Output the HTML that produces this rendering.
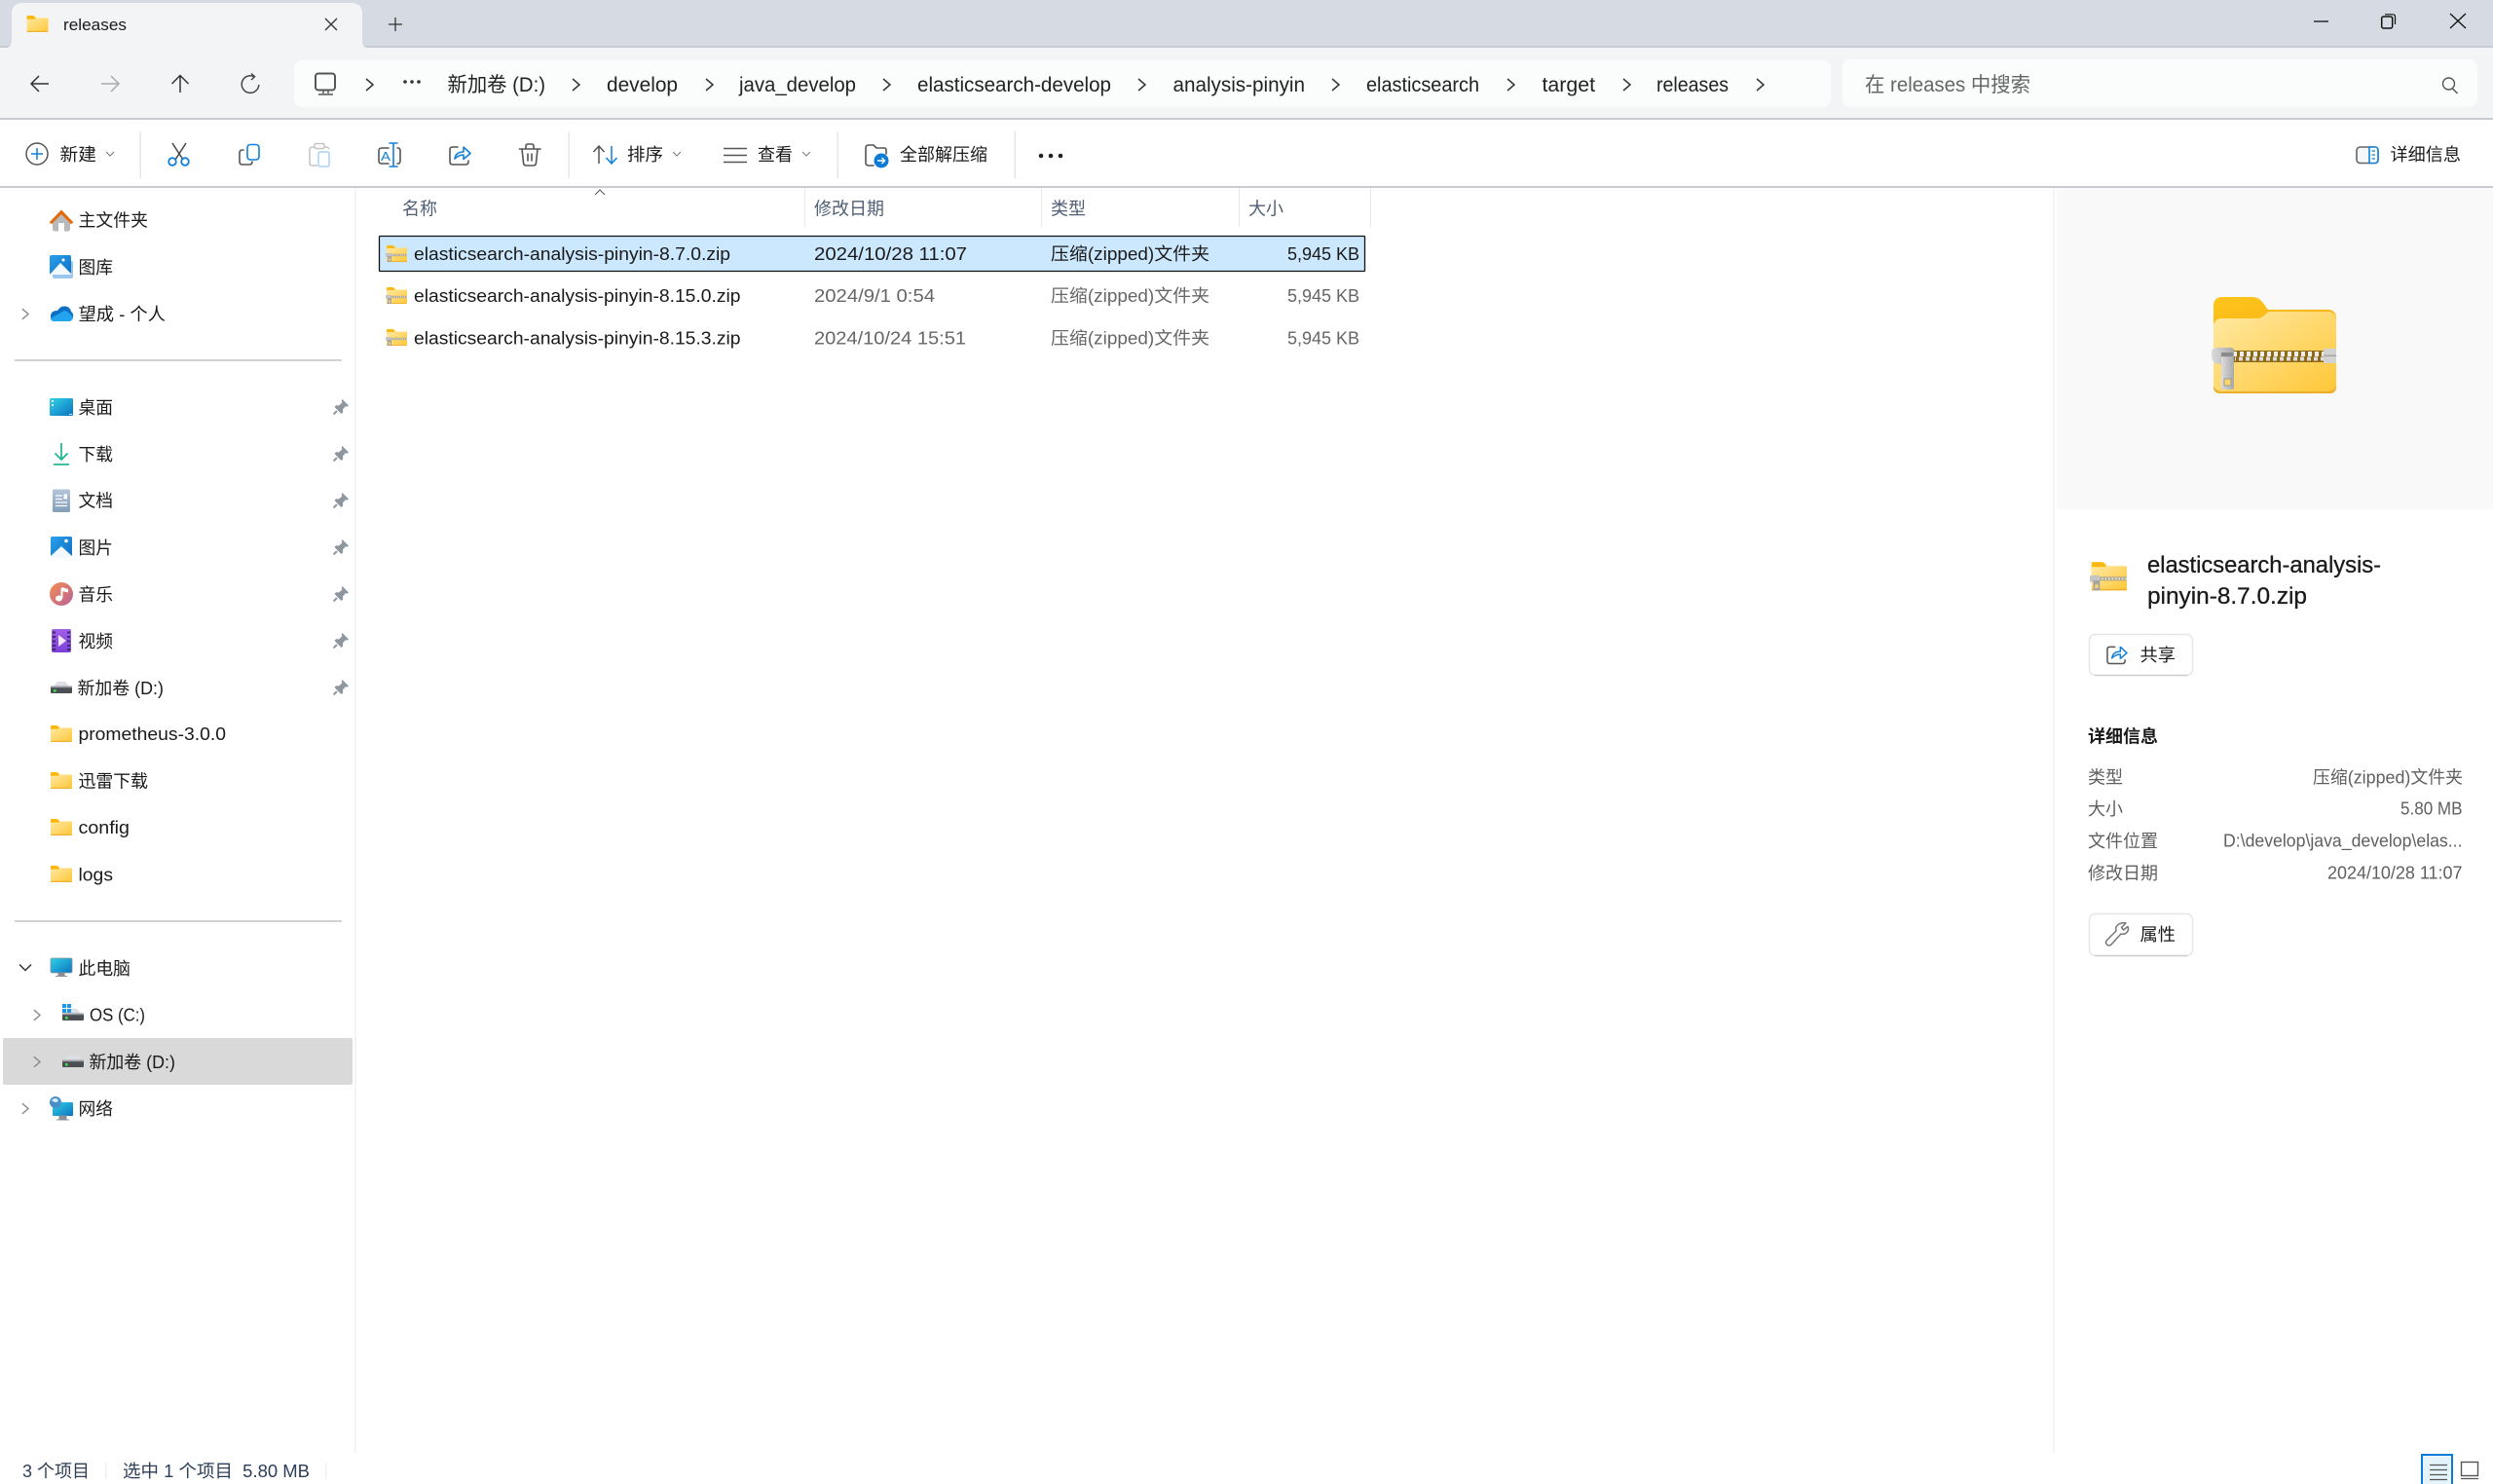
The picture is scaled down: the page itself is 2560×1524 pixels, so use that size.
<!DOCTYPE html>
<html lang="zh-CN">
<head>
<meta charset="utf-8">
<title>releases</title>
<style>
html,body{margin:0;padding:0;background:#fff;width:2560px;height:1524px;overflow:hidden}
svg{display:block}
text{font-family:"Liberation Sans","Noto Sans CJK SC",sans-serif;font-size:18px;fill:#1a1a1a;white-space:pre}
.a{font-size:21px;fill:#222}
.g{fill:#666}
.h{fill:#4f5f75}
.p{fill:#5f5f5f}
.s{fill:#2d3f58}
.i{fill:none;stroke:#555;stroke-width:1.6;stroke-linecap:round;stroke-linejoin:round}
.b{fill:none;stroke:#1080d8;stroke-width:1.6;stroke-linecap:round;stroke-linejoin:round}
</style>
</head>
<body>
<svg xmlns="http://www.w3.org/2000/svg" width="2560" height="1524" viewBox="0 0 2560 1524">
<defs>
<linearGradient id="fg" x1="0" y1="0" x2="1" y2="1"><stop offset="0" stop-color="#ffe9a3"/><stop offset="1" stop-color="#ffc737"/></linearGradient>
<linearGradient id="tb" x1="0" y1="0" x2="1" y2="1"><stop offset="0" stop-color="#ffc61c"/><stop offset="1" stop-color="#f4ae12"/></linearGradient>
<linearGradient id="mt" x1="0" y1="0" x2="1" y2="0"><stop offset="0" stop-color="#dcdcdc"/><stop offset="1" stop-color="#a9a9a9"/></linearGradient>
<linearGradient id="blue" x1="0" y1="0" x2="1" y2="1"><stop offset="0" stop-color="#2aa0ea"/><stop offset="1" stop-color="#0f6fc4"/></linearGradient>
<linearGradient id="desk" x1="0" y1="0" x2="1" y2="1"><stop offset="0" stop-color="#2fd3e6"/><stop offset="1" stop-color="#0c72c0"/></linearGradient>
<linearGradient id="mus" x1="0" y1="0" x2="1" y2="1"><stop offset="0" stop-color="#f29050"/><stop offset="1" stop-color="#b9609a"/></linearGradient>
<linearGradient id="vid" x1="0" y1="0" x2="0" y2="1"><stop offset="0" stop-color="#a060e8"/><stop offset="1" stop-color="#7d3ed8"/></linearGradient>
<linearGradient id="doc" x1="0" y1="0" x2="0" y2="1"><stop offset="0" stop-color="#b4c6d9"/><stop offset="1" stop-color="#849eb9"/></linearGradient>
<symbol id="fold" viewBox="0 0 22 17">
<path d="M0 1a1 1 0 0 1 1-1h5q1 0 2 1l1.500 1.500H21a1 1 0 0 1 1 1V8H0z" fill="#fdb913"/>
<path d="M0 4.500a.8.800 0 0 1 .8-.8H7q1 0 2-.8L9.500 2.500H21a1 1 0 0 1 1 1V16a1 1 0 0 1-1 1H1a1 1 0 0 1-1-1z" fill="url(#fg)"/>
<path d="M0 15.800h22V16a1 1 0 0 1-1 1H1a1 1 0 0 1-1-1z" fill="#f0b030"/>
</symbol>
<symbol id="zip" viewBox="-2 0 130 100">
<path d="M0 8a8 8 0 0 1 8-8H40q6 0 10 5L56 13H118a8 8 0 0 1 8 8V40H0z" fill="url(#tb)"/>
<path d="M0 30a8 8 0 0 1 8-8H44q6 0 10-5L57 15H118a8 8 0 0 1 8 8V91a8 8 0 0 1-8 8H8a8 8 0 0 1-8-8z" fill="url(#fg)"/>
<path d="M0 91v2a6 6 0 0 0 6 6H120a6 6 0 0 0 6-6V91a8 8 0 0 1-8 6H8a8 8 0 0 1-8-6z" fill="#edae2e"/>
<rect x="20" y="55" width="96" height="12" fill="#8f6a14"/>
<path d="M20 58.500H116" stroke="#eee" stroke-width="5" stroke-dasharray="4 3"/>
<path d="M22 63.500H116" stroke="#ddd" stroke-width="4" stroke-dasharray="4 3" stroke-dashoffset="3"/>
<path d="M-2 57q0-5 6-5H18q3 0 3 3V63q0 6-6 6H8q-10 0-10-8z" fill="url(#mt)"/>
<rect x="8" y="57" width="12" height="4" fill="#8b8b8b"/>
<path d="M8 62H21V93q0 2-2 2H10q-2 0-2-2z" fill="url(#mt)"/>
<rect x="11" y="84" width="7" height="7" fill="#ffd665" stroke="#999"/>
<rect x="113" y="53" width="13" height="15" rx="1" fill="#d2d2d2"/>
<rect x="113" y="59.500" width="13" height="1.500" fill="#a5a5a5"/>
</symbol>
<symbol id="zips" viewBox="0 0 22 17">
<path d="M1 1a1 1 0 0 1 1-1h5q1 0 2 1l1 1.500H21a1 1 0 0 1 1 1V8H1z" fill="#fdb913"/>
<path d="M1 4a1 1 0 0 1 1-1H8q1 0 2-.5H21a1 1 0 0 1 1 1V16a1 1 0 0 1-1 1H2a1 1 0 0 1-1-1z" fill="url(#fg)"/>
<path d="M1 16h21a1 1 0 0 1-1 1H2a1 1 0 0 1-1-1z" fill="#f0b030"/>
<rect x="5" y="8.800" width="17" height="2.400" fill="#b5a98c"/>
<path d="M5 10H22" stroke="#e8e8e8" stroke-width="1" stroke-dasharray="1 1"/>
<rect x="0" y="8" width="6" height="4" rx="1" fill="#c4c4c4"/>
<rect x="2" y="11" width="4" height="6" fill="#a5a5a5"/>
<rect x="3" y="13.500" width="2" height="2" fill="#ffd665"/>
</symbol>
<symbol id="pin" viewBox="0 0 16 16">
<path d="M9.500 0L16 6.500l-1.500 1.200-1.500-.6L10 10.500l.2 3L8.500 15 1.500 8 3 6.300l3 .2 3.300-3-.6-1.500z" fill="#8e969f"/>
<path d="M4 12L.5 15.500" stroke="#8e969f" stroke-width="2"/>
</symbol>
<symbol id="drv" viewBox="0 0 22 12">
<path d="M3 5L6 1q.7-1 2-1h6q1.300 0 2 1l3 4z" fill="#dcdfe3"/>
<path d="M0 5.500a1 1 0 0 1 1-1h20a1 1 0 0 1 1 1V11a1 1 0 0 1-1 1H1a1 1 0 0 1-1-1z" fill="#4b4f54"/>
<path d="M0 4.500h22v1.800H0z" fill="#9b9ea3"/>
<rect x="3" y="8" width="2.600" height="2.600" fill="#3ee04a"/>
</symbol>
<symbol id="chv" viewBox="0 0 9 14"><path d="M1 1L8 7L1 13" fill="none" stroke="#333" stroke-width="1.500"/></symbol>
<symbol id="chg" viewBox="0 0 9 14"><path d="M1 1L8 7L1 13" fill="none" stroke="#8a8a8a" stroke-width="1.600"/></symbol>
<symbol id="share" viewBox="0 0 23 22">
<path class="i" d="M9 3H3.500Q1 3 1 5.500V18q0 3 3 3H17q3 0 3-3v-1"/>
<path class="b" d="M6 15q1-7 9-7V3l7 6.500L15 15.500V11q-5 0-9 4z"/>
</symbol>
</defs>

<!-- backgrounds -->
<rect width="2560" height="48" fill="#d6dae2"/>
<rect y="47" width="2560" height="2" fill="#c6cad2"/>
<rect y="49" width="2560" height="73" fill="#f3f4f6"/>
<rect y="121" width="2560" height="2" fill="#c8ccd2"/>
<rect y="123" width="2560" height="68" fill="#fff"/>
<rect y="191" width="2560" height="2" fill="#c8ccd2"/>

<!-- tab -->
<path d="M6 49Q12 49 12 41V14Q12 3 24 3H360Q372 3 372 14V41Q372 49 378 49Z" fill="#f3f4f6"/>
<use href="#fold" x="27" y="16" width="23" height="17"/>
<text x="65" y="31" style="font-size:17px" textLength="65" lengthAdjust="spacingAndGlyphs">releases</text>
<path d="M334 19L346 31M346 19L334 31" stroke="#333" stroke-width="1.300" fill="none"/>
<path d="M406 18V32M399 25H413" stroke="#333" stroke-width="1.300" fill="none"/>

<!-- window controls -->
<path d="M2376 22H2391" stroke="#111" stroke-width="1.300"/>
<rect x="2445.700" y="17" width="11" height="12" rx="2" fill="none" stroke="#111" stroke-width="1.500"/>
<path d="M2449 14.800H2457q2.500 0 2.500 2.500V25" fill="none" stroke="#111" stroke-width="1.200"/>
<path d="M2516 14L2532 29M2532 14L2516 29" stroke="#111" stroke-width="1.300"/>

<!-- nav icons -->
<path d="M50 86H33M40 78L32 86L40 94" fill="none" stroke="#333" stroke-width="1.500"/>
<path d="M104 86H121M114 78L122 86L114 94" fill="none" stroke="#aaa" stroke-width="1.500"/>
<path d="M185 95V78M176.500 86L185 77.500L193.500 86" fill="none" stroke="#333" stroke-width="1.500"/>
<path d="M260.500 78.500A8.800 8.800 0 1 0 265.800 87M258 75.500l3.500 3.300-3.500 3.200" fill="none" stroke="#444" stroke-width="1.500"/>

<!-- address -->
<rect x="302" y="62" width="1578" height="48" rx="8" fill="#fbfcfc"/>
<rect x="324" y="75.500" width="20" height="17" rx="3" fill="none" stroke="#555" stroke-width="2"/>
<path d="M332 93v3M337 93v3M327 97H342" stroke="#555" stroke-width="1.400" fill="none"/>
<use href="#chv" x="375" y="80" width="9" height="14"/>
<circle cx="416" cy="84" r="1.800" fill="#333"/><circle cx="423" cy="84" r="1.800" fill="#333"/><circle cx="430" cy="84" r="1.800" fill="#333"/>
<text class="a" x="459.500" y="94" textLength="100.500" lengthAdjust="spacingAndGlyphs">新加卷 (D:)</text>
<use href="#chv" x="587" y="80" width="9" height="14"/>
<text class="a" x="623" y="94" textLength="73" lengthAdjust="spacingAndGlyphs">develop</text>
<use href="#chv" x="724" y="80" width="9" height="14"/>
<text class="a" x="759" y="94" textLength="120" lengthAdjust="spacingAndGlyphs">java_develop</text>
<use href="#chv" x="906" y="80" width="9" height="14"/>
<text class="a" x="942" y="94" textLength="199" lengthAdjust="spacingAndGlyphs">elasticsearch-develop</text>
<use href="#chv" x="1168" y="80" width="9" height="14"/>
<text class="a" x="1204.500" y="94" textLength="135.500" lengthAdjust="spacingAndGlyphs">analysis-pinyin</text>
<use href="#chv" x="1367" y="80" width="9" height="14"/>
<text class="a" x="1403" y="94" textLength="116" lengthAdjust="spacingAndGlyphs">elasticsearch</text>
<use href="#chv" x="1547" y="80" width="9" height="14"/>
<text class="a" x="1583.500" y="94" textLength="54.500" lengthAdjust="spacingAndGlyphs">target</text>
<use href="#chv" x="1666" y="80" width="9" height="14"/>
<text class="a" x="1701" y="94" textLength="74" lengthAdjust="spacingAndGlyphs">releases</text>
<use href="#chv" x="1803" y="80" width="9" height="14"/>

<!-- search -->
<rect x="1892" y="61" width="652" height="49" rx="8" fill="#fbfcfc"/>
<text class="a" x="1915" y="94" style="fill:#666" textLength="170" lengthAdjust="spacingAndGlyphs">在 releases 中搜索</text>
<circle cx="2514.500" cy="86" r="6" fill="none" stroke="#555" stroke-width="1.400"/>
<path d="M2518.500 91L2523.500 96" stroke="#555" stroke-width="1.500"/>

<!-- toolbar -->
<circle cx="38" cy="158" r="11" fill="none" stroke="#555" stroke-width="1.500"/>
<path d="M38 152V164M32 158H44" stroke="#1080d8" stroke-width="1.500"/>
<text x="61.500" y="165" textLength="37.500" lengthAdjust="spacingAndGlyphs">新建</text>
<path d="M109 156L113 160L117 156" fill="none" stroke="#777"/>
<rect x="143.500" y="135" width="1.500" height="48" fill="#e6e6e6"/>
<!-- scissors -->
<path d="M177 147L188 164M191 147L180 164" stroke="#444" stroke-width="1.500" fill="none"/>
<circle cx="177" cy="166" r="3.800" fill="none" stroke="#1080d8" stroke-width="1.800"/>
<circle cx="190" cy="166" r="3.800" fill="none" stroke="#1080d8" stroke-width="1.800"/>
<!-- copy -->
<path class="i" d="M250 154H249q-3 0-3 3V166q0 3 3 3H256q3 0 3-3"/>
<rect x="254" y="148.500" width="12" height="15.500" rx="3" class="b"/>
<!-- paste -->
<path d="M323 151H321q-3 0-3 3V167q0 3 3 3H326M333 151H335q2 0 3 2" fill="none" stroke="#c4c4c4" stroke-width="1.500"/>
<rect x="323" y="147.500" width="10" height="5" rx="1.500" fill="none" stroke="#c4c4c4" stroke-width="1.500"/>
<rect x="327" y="156" width="11" height="15" rx="2" fill="none" stroke="#a8d0f2" stroke-width="1.500"/>
<!-- rename -->
<path class="i" d="M399 152H392q-3 0-3 3V165q0 3 3 3H399M408 152H409q2 0 2 3V165q0 3-2 3H408"/>
<path class="b" d="M404 147V171M400 147H408M400 171H408"/>
<text x="391" y="165" style="font-size:13px;fill:#1080d8" textLength="10" lengthAdjust="spacingAndGlyphs">A</text>
<!-- share -->
<use href="#share" x="461" y="148" width="23" height="22"/>
<!-- delete -->
<path class="i" d="M533.500 153H555M540 153V150q0-2 2-2h4q2 0 2 2v3M536 153L537.500 167q.3 3 3 3h7q3 0 3-3L552 153M542 158V165M546 158V165"/>
<rect x="583.500" y="135" width="1.500" height="48" fill="#e6e6e6"/>
<!-- sort -->
<path d="M615 168V150M609.500 156L615 150L620.500 156" fill="none" stroke="#555" stroke-width="1.500"/>
<path d="M628 150V168M622.500 162L628 168L633.500 162" fill="none" stroke="#1080d8" stroke-width="1.500"/>
<text x="644" y="165" textLength="37" lengthAdjust="spacingAndGlyphs">排序</text>
<path d="M691 156L695 160L699 156" fill="none" stroke="#777"/>
<path d="M743 152.500H767M743 159.500H767M743 166.500H767" stroke="#555" stroke-width="1.600"/>
<text x="778" y="165" textLength="36" lengthAdjust="spacingAndGlyphs">查看</text>
<path d="M824 156L828 160L832 156" fill="none" stroke="#777"/>
<rect x="859.500" y="135" width="1.500" height="48" fill="#e6e6e6"/>
<!-- extract -->
<path class="i" d="M889 152q0-3 3-3h5l3 3H908q2 0 2 2v4M889 152V167q0 3 3 3h5"/>
<circle cx="905" cy="165" r="7.500" fill="#0f7bd8"/>
<path d="M901 165H908M905.500 162L908.500 165L905.500 168" stroke="#fff" stroke-width="1.400" fill="none"/>
<text x="924" y="165" textLength="90" lengthAdjust="spacingAndGlyphs">全部解压缩</text>
<rect x="1041.500" y="135" width="1.500" height="48" fill="#e6e6e6"/>
<circle cx="1069" cy="160" r="2.300" fill="#222"/><circle cx="1079" cy="160" r="2.300" fill="#222"/><circle cx="1089" cy="160" r="2.300" fill="#222"/>
<rect x="2420" y="151" width="22" height="16.500" rx="3.500" fill="#f6f7f8" stroke="#666" stroke-width="1.600"/>
<path d="M2433 151H2438.500q3.500 0 3.500 3.500V164q0 3.500-3.500 3.500H2433z" fill="#fff" stroke="#1080d8" stroke-width="1.600"/>
<path d="M2435.500 155h3.500M2435.500 159h3.500M2435.500 163h3.500" stroke="#1080d8" stroke-width="1.300"/>
<text x="2454.500" y="165" textLength="72.500" lengthAdjust="spacingAndGlyphs">详细信息</text>

<!-- sidebar -->
<rect x="364" y="193" width="2" height="1299" fill="#f4f4f4"/>
<path d="M51 228L63 215.500L75 228V229L72 230L63 221L54 230L51 229Z" fill="#e2690a"/>
<path d="M54 229L63 220L72 229V235q0 2.500-2.500 2.500H66V229H60V237.500H56.500Q54 237.500 54 235Z" fill="#b9b9b9"/>
<text x="80.500" y="232.500" textLength="71.500" lengthAdjust="spacingAndGlyphs">主文件夹</text>
<rect x="54" y="268" width="21" height="18" rx="2" fill="#9cc7ec"/>
<rect x="51" y="262" width="22" height="20" rx="2" fill="url(#blue)"/>
<path d="M51 282L62 270L73 281V282Z" fill="#f4f9fd"/>
<circle cx="65" cy="267" r="1.500" fill="#fff"/>
<text x="80.500" y="281" textLength="35.500" lengthAdjust="spacingAndGlyphs">图库</text>
<path d="M52 325q0-6 7-6q3-5 8-4.500 5 .5 6 5.500 3 2 2 6-1 3.500-4 3.500H56q-4 0-4-4.500z" fill="#0d6fc6"/>
<path d="M56 330q-4 0-4-3l14-8q5 1 9 7-1 4-4 4z" fill="#22a4ee"/>
<use href="#chg" x="22" y="316" width="8" height="13"/>
<text x="80.500" y="329" textLength="89.500" lengthAdjust="spacingAndGlyphs">望成 - 个人</text>
<rect x="15" y="369" width="336" height="2" fill="#d2d2d2"/>

<rect x="51" y="409" width="24" height="18" rx="1.500" fill="url(#desk)"/>
<rect x="53" y="411" width="2" height="2" fill="#e6fafd"/><rect x="53" y="415" width="2" height="2" fill="#e6fafd"/>
<rect x="71" y="425" width="3" height="1" fill="#cfeefb"/>
<text x="80.500" y="425" textLength="35.500" lengthAdjust="spacingAndGlyphs">桌面</text>
<path d="M63 455V472M56.500 465.500L63 472L69.500 465.500" fill="none" stroke="#1eb593" stroke-width="1.700"/>
<path d="M55 477H71" stroke="#1eb593" stroke-width="1.700"/>
<text x="80.500" y="473" textLength="35.500" lengthAdjust="spacingAndGlyphs">下载</text>
<rect x="54" y="502.500" width="18" height="23.500" rx="1.500" fill="url(#doc)"/>
<path d="M57 509H64M57 512.500H64M57 516H69M57 519.500H69" stroke="#fff" stroke-width="1.200"/><rect x="65.500" y="507.500" width="3.500" height="5" fill="#fff"/>
<text x="80.500" y="520.500" textLength="35.500" lengthAdjust="spacingAndGlyphs">文档</text>
<rect x="52" y="551" width="22" height="22" rx="1.500" fill="url(#blue)"/>
<path d="M52 573V571L63 561L74 571V573Z" fill="#f4f9fd"/>
<circle cx="68" cy="555.500" r="1.800" fill="#fff"/>
<text x="80.500" y="569" textLength="35.500" lengthAdjust="spacingAndGlyphs">图片</text>
<circle cx="63" cy="610" r="12" fill="url(#mus)"/>
<path d="M63.500 604V614" stroke="#fff" stroke-width="2"/><ellipse cx="60.500" cy="614.500" rx="3.500" ry="3" fill="#fff"/>
<path d="M63.500 603L70 605V608.500L63.500 607Z" fill="#fff"/>
<text x="80.500" y="617" textLength="35.500" lengthAdjust="spacingAndGlyphs">音乐</text>
<rect x="53" y="646" width="20" height="24" rx="2" fill="url(#vid)"/>
<path d="M54 649.500h3M54 654h3M54 658.500h3M54 663h3M54 667h3M69 649.500h3M69 654h3M69 658.500h3M69 663h3M69 667h3" stroke="#3c2a6e" stroke-width="2"/>
<path d="M60 652L68 658L60 664Z" fill="#eee6ff"/>
<text x="80.500" y="665" textLength="35.500" lengthAdjust="spacingAndGlyphs">视频</text>
<use href="#drv" x="52" y="700" width="22" height="12"/>
<text x="79.500" y="713" textLength="88.500" lengthAdjust="spacingAndGlyphs">新加卷 (D:)</text>
<use href="#pin" x="342" y="410" width="16" height="16"/>
<use href="#pin" x="342" y="458" width="16" height="16"/>
<use href="#pin" x="342" y="506" width="16" height="16"/>
<use href="#pin" x="342" y="554" width="16" height="16"/>
<use href="#pin" x="342" y="602" width="16" height="16"/>
<use href="#pin" x="342" y="650" width="16" height="16"/>
<use href="#pin" x="342" y="698" width="16" height="16"/>
<use href="#fold" x="52" y="745" width="22" height="17"/>
<text x="80.500" y="760" textLength="151.500" lengthAdjust="spacingAndGlyphs">prometheus-3.0.0</text>
<use href="#fold" x="52" y="793" width="22" height="17"/>
<text x="80.500" y="808.500" textLength="71.500" lengthAdjust="spacingAndGlyphs">迅雷下载</text>
<use href="#fold" x="52" y="841" width="22" height="17"/>
<text x="80.500" y="856" textLength="52.500" lengthAdjust="spacingAndGlyphs">config</text>
<use href="#fold" x="52" y="889" width="22" height="17"/>
<text x="80.500" y="904.500" textLength="35.500" lengthAdjust="spacingAndGlyphs">logs</text>
<rect x="15" y="945" width="336" height="2" fill="#d2d2d2"/>
<path d="M20 990.500L26 996.500L32 990.500" fill="none" stroke="#333" stroke-width="1.500"/>
<rect x="52" y="984" width="22" height="15" rx="1.500" fill="url(#desk)" stroke="#8a9199" stroke-width=".8"/>
<path d="M60 999H66V1002H60ZM57 1002.500H69" stroke="#8a8f95" fill="#8a8f95"/>
<text x="80.500" y="1001" textLength="53.500" lengthAdjust="spacingAndGlyphs">此电脑</text>
<use href="#chg" x="34" y="1036" width="8" height="13"/>
<use href="#drv" x="64" y="1036" width="22" height="12"/>
<rect x="64" y="1031" width="4" height="4" fill="#1f96ea"/><rect x="69" y="1031" width="4" height="4" fill="#1f96ea"/><rect x="64" y="1036" width="4" height="4" fill="#1f96ea"/><rect x="69" y="1036" width="4" height="4" fill="#1f96ea"/>
<text x="92" y="1048.500" textLength="57" lengthAdjust="spacingAndGlyphs">OS (C:)</text>
<rect x="3" y="1066" width="359" height="48" rx="2" fill="#d9d9d9"/>
<use href="#chg" x="34" y="1084" width="8" height="13"/>
<use href="#drv" x="64" y="1084" width="22" height="12"/>
<text x="91.500" y="1097" textLength="88.500" lengthAdjust="spacingAndGlyphs">新加卷 (D:)</text>
<use href="#chg" x="22" y="1132" width="8" height="13"/>
<rect x="54" y="1132" width="21" height="14" rx="1" fill="url(#desk)"/>
<path d="M61 1146H68V1149H61ZM58 1150H71" stroke="#8a8f95" fill="#8a8f95"/>
<circle cx="57" cy="1132" r="6" fill="#4a90c8"/><path d="M53 1130q4-4 7 0-2 4-7 0z" fill="#d8ecf8"/>
<text x="80.500" y="1145" textLength="35.500" lengthAdjust="spacingAndGlyphs">网络</text>

<!-- header -->
<path d="M611 200L616 195L621 200" fill="none" stroke="#555" stroke-width="1"/>
<text class="h" x="413" y="220.500" textLength="36" lengthAdjust="spacingAndGlyphs">名称</text>
<rect x="826" y="193" width="1" height="40" fill="#e6e6e6"/>
<text class="h" x="836" y="220.500" textLength="72" lengthAdjust="spacingAndGlyphs">修改日期</text>
<rect x="1069" y="193" width="1" height="40" fill="#e6e6e6"/>
<text class="h" x="1079" y="220.500" textLength="36" lengthAdjust="spacingAndGlyphs">类型</text>
<rect x="1272" y="193" width="1" height="40" fill="#e6e6e6"/>
<text class="h" x="1282" y="220.500" textLength="36" lengthAdjust="spacingAndGlyphs">大小</text>
<rect x="1407" y="193" width="1" height="40" fill="#e6e6e6"/>

<!-- rows -->
<rect x="389.500" y="242.500" width="1012" height="36" rx="1" fill="#cce8ff" stroke="#111" stroke-width="1.300"/>
<use href="#zips" x="396" y="252" width="22" height="17"/>
<text x="425" y="267" textLength="325" lengthAdjust="spacingAndGlyphs">elasticsearch-analysis-pinyin-8.7.0.zip</text>
<text x="836" y="267" textLength="157" lengthAdjust="spacingAndGlyphs">2024/10/28 11:07</text>
<text x="1079" y="267" textLength="163" lengthAdjust="spacingAndGlyphs">压缩(zipped)文件夹</text>
<text x="1322" y="267" textLength="74" lengthAdjust="spacingAndGlyphs">5,945 KB</text>
<use href="#zips" x="396" y="295" width="22" height="17"/>
<text x="425" y="310" textLength="335.500" lengthAdjust="spacingAndGlyphs">elasticsearch-analysis-pinyin-8.15.0.zip</text>
<text class="g" x="836" y="310" textLength="124" lengthAdjust="spacingAndGlyphs">2024/9/1 0:54</text>
<text class="g" x="1079" y="310" textLength="163" lengthAdjust="spacingAndGlyphs">压缩(zipped)文件夹</text>
<text class="g" x="1322" y="310" textLength="74" lengthAdjust="spacingAndGlyphs">5,945 KB</text>
<use href="#zips" x="396" y="338" width="22" height="17"/>
<text x="425" y="353.500" textLength="335.500" lengthAdjust="spacingAndGlyphs">elasticsearch-analysis-pinyin-8.15.3.zip</text>
<text class="g" x="836" y="353.500" textLength="156" lengthAdjust="spacingAndGlyphs">2024/10/24 15:51</text>
<text class="g" x="1079" y="353.500" textLength="163" lengthAdjust="spacingAndGlyphs">压缩(zipped)文件夹</text>
<text class="g" x="1322" y="353.500" textLength="74" lengthAdjust="spacingAndGlyphs">5,945 KB</text>

<!-- details pane -->
<rect x="2108" y="193" width="2" height="1299" fill="#f4f4f4"/>
<rect x="2112" y="193" width="448" height="330" fill="#f9f9f9"/>
<use href="#zip" x="2271" y="305" width="130" height="100"/>
<use href="#zips" x="2146" y="577" width="38" height="29.500"/>
<text x="2205" y="588" style="font-size:24px;stroke:#1a1a1a;stroke-width:.3" textLength="240" lengthAdjust="spacingAndGlyphs">elasticsearch-analysis-</text>
<text x="2205" y="620" style="font-size:24px;stroke:#1a1a1a;stroke-width:.3" textLength="164" lengthAdjust="spacingAndGlyphs">pinyin-8.7.0.zip</text>
<rect x="2145.500" y="651.500" width="106" height="42" rx="6" fill="#fff" stroke="#e6e6e6" stroke-width="1.500"/>
<path d="M2151 693.500H2246" stroke="#d0d0d0" stroke-width="1.500"/>
<use href="#share" x="2163" y="661.500" width="22" height="21"/>
<text x="2197.500" y="679" textLength="36.500" lengthAdjust="spacingAndGlyphs">共享</text>
<text x="2144" y="762.500" style="font-weight:700" textLength="72" lengthAdjust="spacingAndGlyphs">详细信息</text>
<text class="p" x="2144" y="804.500" textLength="36" lengthAdjust="spacingAndGlyphs">类型</text>
<text class="p" x="2375" y="804.500" textLength="154" lengthAdjust="spacingAndGlyphs">压缩(zipped)文件夹</text>
<text class="p" x="2144" y="837" textLength="36" lengthAdjust="spacingAndGlyphs">大小</text>
<text class="p" x="2465" y="836.500" textLength="63.500" lengthAdjust="spacingAndGlyphs">5.80 MB</text>
<text class="p" x="2144" y="870" textLength="72" lengthAdjust="spacingAndGlyphs">文件位置</text>
<text class="p" x="2283" y="869.500" textLength="245.500" lengthAdjust="spacingAndGlyphs">D:\develop\java_develop\elas...</text>
<text class="p" x="2144" y="903" textLength="72" lengthAdjust="spacingAndGlyphs">修改日期</text>
<text class="p" x="2390" y="902.500" textLength="138.500" lengthAdjust="spacingAndGlyphs">2024/10/28 11:07</text>
<rect x="2145.500" y="938.500" width="106" height="43" rx="6" fill="#fff" stroke="#e6e6e6" stroke-width="1.500"/>
<path d="M2151 981.500H2246" stroke="#d0d0d0" stroke-width="1.500"/>
<path d="M2183 948l-4.500 4.500 2 2.500 4.500-3.500q1.500 4-1.500 6.500-2.500 2-5.500 1L2168 970q-2.500 2-4.500 0t0-4.500L2173 956q-1-3.500 1.500-6 3.500-3 8.500-2z" fill="none" stroke="#777" stroke-width="1.500" stroke-linejoin="round"/>
<text x="2197.500" y="966" textLength="36.500" lengthAdjust="spacingAndGlyphs">属性</text>

<!-- status bar -->
<text class="s" x="23" y="1517" textLength="69" lengthAdjust="spacingAndGlyphs">3 个项目</text>
<rect x="108" y="1502" width="1.500" height="17" fill="#f0f0f0"/>
<text class="s" x="126" y="1517" textLength="192" lengthAdjust="spacingAndGlyphs">选中 1 个项目  5.80 MB</text>
<rect x="334" y="1502" width="1.500" height="17" fill="#f0f0f0"/>
<rect x="2487" y="1494" width="31" height="32" fill="#e5f3fb" stroke="#0a7bd6" stroke-width="2"/>
<path d="M2495 1504.500H2513M2495 1509.500H2513M2495 1514.500H2513M2495 1519.500H2513" stroke="#555" stroke-width="1.300"/>
<rect x="2527.500" y="1501.500" width="17" height="14" fill="none" stroke="#555" stroke-width="1.400"/>
<path d="M2527 1518.500H2545" stroke="#555" stroke-width="1.300"/>
</svg>
</body>
</html>
